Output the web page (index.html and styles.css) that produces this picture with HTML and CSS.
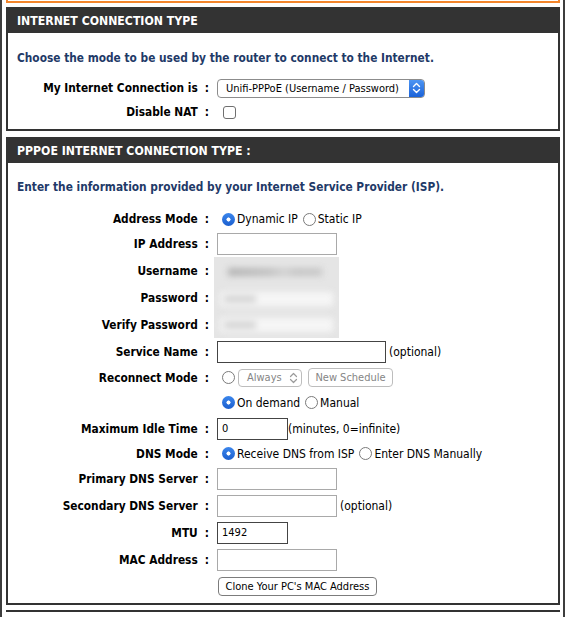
FILE: index.html
```html
<!DOCTYPE html>
<html lang="en">
<head>
<meta charset="utf-8">
<title>WAN Settings</title>
<link rel="stylesheet" href="styles.css">
</head>
<body>
<div class="page">
  <div class="box-tail"></div>

  <section class="box">
    <h2 class="box-head">INTERNET CONNECTION TYPE</h2>
    <p class="box-note note-type">Choose the mode to be used by the router to connect to the Internet.</p>
    <div class="form form-type">
      <div class="lbl">My Internet Connection is<span class="colon">:</span></div>
      <div class="ctl">
        <div class="select select-main">
          <span class="select-text">Unifi-PPPoE (Username / Password)</span>
          <span class="stepper">
            <svg width="9" height="12" viewBox="0 0 9 12"><path d="M1.5 4.5 L4.5 1.5 L7.5 4.5 M1.5 7.5 L4.5 10.5 L7.5 7.5" fill="none" stroke="#fff" stroke-width="1.4" stroke-linecap="round" stroke-linejoin="round"/></svg>
          </span>
        </div>
      </div>
      <div class="lbl">Disable NAT<span class="colon">:</span></div>
      <div class="ctl"><span class="checkbox"></span></div>
    </div>
  </section>

  <section class="box">
    <h2 class="box-head">PPPOE INTERNET CONNECTION TYPE :</h2>
    <p class="box-note note-pppoe">Enter the information provided by your Internet Service Provider (ISP).</p>
    <div class="form form-pppoe">
      <div class="lbl">Address Mode<span class="colon">:</span></div>
      <div class="ctl">
        <span class="radio on"></span><span class="opt">Dynamic IP</span>
        <span class="radio"></span><span class="opt">Static IP</span>
      </div>

      <div class="lbl">IP Address<span class="colon">:</span></div>
      <div class="ctl"><span class="field w-mid"></span></div>

      <div class="lbl">Username<span class="colon">:</span></div>
      <div class="ctl ctl-hidden">
        <div class="masked">
          <span class="masked-user"></span>
          <span class="masked-pass pass-1"><span class="dots"></span></span>
          <span class="masked-pass pass-2"><span class="dots"></span></span>
        </div>
      </div>
      <div class="lbl">Password<span class="colon">:</span></div>
      <div class="lbl">Verify Password<span class="colon">:</span></div>

      <div class="lbl">Service Name<span class="colon">:</span></div>
      <div class="ctl"><span class="field w-wide dark"></span><span class="hint">(optional)</span></div>

      <div class="lbl">Reconnect Mode<span class="colon">:</span></div>
      <div class="ctl">
        <span class="radio"></span>
        <span class="select select-off">
          <span class="select-text">Always</span>
          <svg class="chev" width="9" height="12" viewBox="0 0 9 12"><path d="M1.5 4.5 L4.5 1.5 L7.5 4.5 M1.5 7.5 L4.5 10.5 L7.5 7.5" fill="none" stroke="#9a9a9a" stroke-width="1.2" stroke-linecap="round" stroke-linejoin="round"/></svg>
        </span>
        <span class="btn btn-off">New Schedule</span>
      </div>

      <div class="lbl"></div>
      <div class="ctl">
        <span class="radio on"></span><span class="opt">On demand</span>
        <span class="radio"></span><span class="opt">Manual</span>
      </div>

      <div class="lbl">Maximum Idle Time<span class="colon">:</span></div>
      <div class="ctl"><span class="field w-short dark">0</span><span class="hint hint-tight">(minutes, 0=infinite)</span></div>

      <div class="lbl">DNS Mode<span class="colon">:</span></div>
      <div class="ctl">
        <span class="radio on"></span><span class="opt">Receive DNS from ISP</span>
        <span class="radio"></span><span class="opt">Enter DNS Manually</span>
      </div>

      <div class="lbl">Primary DNS Server<span class="colon">:</span></div>
      <div class="ctl"><span class="field w-mid"></span></div>

      <div class="lbl">Secondary DNS Server<span class="colon">:</span></div>
      <div class="ctl"><span class="field w-mid"></span><span class="hint">(optional)</span></div>

      <div class="lbl">MTU<span class="colon">:</span></div>
      <div class="ctl"><span class="field w-short dark">1492</span></div>

      <div class="lbl">MAC Address<span class="colon">:</span></div>
      <div class="ctl"><span class="field w-mid"></span></div>

      <div class="lbl"></div>
      <div class="ctl"><span class="btn btn-clone">Clone Your PC's MAC Address</span></div>
    </div>
  </section>

  <div class="box-next"></div>
</div>
</body>
</html>
```

FILE: styles.css
```css
html, body {
  margin: 0;
  padding: 0;
  background: #fff;
}

body {
  font-family: "DejaVu Sans Condensed", "DejaVu Sans", sans-serif;
  font-size: 12px;
  color: #000;
}

.page {
  width: 565px;
  min-height: 617px;
  box-sizing: border-box;
  border-left: 2px solid #3d3d3d;
  border-right: 2px solid #3d3d3d;
  padding: 0 3px 0 4px;
}

/* bottom edge of the panel above */
.box-tail {
  height: 1px;
  border: 2px solid #f4862c;
  border-top: 0;
}

.box {
  border: 2px solid #333;
  margin-top: 4px;
}

.box + .box {
  margin-top: 6px;
}

.box-head {
  margin: 0;
  height: 24px;
  line-height: 24px;
  padding-left: 9px;
  background: #333;
  color: #fff;
  font-size: 12.2px;
  font-weight: bold;
}

.box-note {
  margin: 0;
  padding-left: 9px;
  line-height: 14px;
  font-size: 11.8px;
  font-weight: bold;
  color: #1f3a68;
}

.note-type {
  margin-top: 18px;
  margin-bottom: 11px;
}

.note-pppoe {
  margin-top: 17px;
  margin-bottom: 14px;
}

.form {
  display: grid;
  grid-template-columns: 201px 1fr;
  column-gap: 8px;
}

.form-type {
  grid-template-rows: 24px 24px;
  padding-bottom: 5px;
}

.form-pppoe {
  grid-template-rows: 22px 27px 27px 27px 27px 27px 25px 25px 27px 23px 27px 27px 27px 27px 27px;
  padding-bottom: 3px;
}

.lbl {
  display: flex;
  align-items: center;
  justify-content: flex-end;
  font-size: 11.8px;
  font-weight: bold;
  white-space: nowrap;
}

.colon {
  margin-left: 7px;
}

.ctl {
  display: flex;
  align-items: center;
  white-space: nowrap;
}

/* username / password cells, kept out of sight */
.ctl-hidden {
  grid-row: span 3;
  align-items: stretch;
}

.masked {
  position: relative;
  margin-left: -3px;
  width: 125px;
  background: #e5e5e5;
  overflow: hidden;
}

.masked-user,
.masked-pass {
  position: absolute;
  filter: blur(3px);
}

.masked-user {
  left: 14px;
  top: 11px;
  width: 94px;
  height: 8px;
  background: linear-gradient(90deg, #b4b4b4 0, #c2c2c2 45%, #d2d2d2 60%, #c6c6c6 72%, #c8c8c8 100%);
}

.masked-pass {
  left: 6px;
  width: 113px;
  height: 14px;
  background: #f6f6f6;
}

.pass-1 { top: 35px; }
.pass-2 { top: 61px; }

.dots {
  position: absolute;
  left: 4px;
  top: 4px;
  width: 32px;
  height: 6px;
  background: #cfcfcf;
}

.select {
  display: flex;
  align-items: center;
  box-sizing: border-box;
  background: #fff;
  border-radius: 4px;
}

.select-main {
  width: 208px;
  height: 19px;
  border: 1px solid #8c8c8c;
  overflow: hidden;
}

.select-main .select-text {
  flex: 1;
  padding-left: 8px;
  font-size: 11px;
}

.stepper {
  width: 15px;
  height: 100%;
  display: flex;
  align-items: center;
  justify-content: center;
  background: linear-gradient(#4d95f3, #1b62d8);
}

.select-off {
  width: 64px;
  height: 18px;
  margin-left: 3px;
  border: 1px solid #bdbdbd;
  color: #858585;
  font-size: 11px;
}

.select-off .select-text {
  flex: 1;
  padding-left: 8px;
}

.chev {
  margin-right: 3px;
}

.btn {
  display: inline-flex;
  align-items: center;
  justify-content: center;
  box-sizing: border-box;
  background: #fff;
  border-radius: 4px;
  font-size: 11px;
}

.btn-off {
  width: 85px;
  height: 19px;
  margin-left: 6px;
  border: 1px solid #bdbdbd;
  color: #858585;
}

.btn-clone {
  width: 159px;
  height: 19px;
  margin-left: 1px;
  border: 1px solid #7c7c7c;
  color: #000;
}

.checkbox {
  width: 11px;
  height: 11px;
  margin-left: 6px;
  border: 1px solid #6f6f6f;
  border-radius: 3px;
  background: #fff;
}

.radio {
  flex: none;
  width: 11px;
  height: 11px;
  margin-left: 5px;
  border: 1px solid #7a7a7a;
  border-radius: 50%;
  background: #fff;
}

.radio.on {
  width: 13px;
  height: 13px;
  border: 0;
  background: radial-gradient(circle, #fff 0 1.8px, transparent 2.3px), linear-gradient(#3b86ec, #1c5fcf);
}

.opt {
  margin-left: 2px;
}

.opt + .radio {
  margin-left: 5px;
}

.field {
  display: flex;
  align-items: center;
  box-sizing: border-box;
  height: 22px;
  padding-left: 4px;
  border: 1px solid #a9a9a9;
  background: #fff;
  font-size: 11px;
}

.field.dark {
  border-color: #444;
}

.w-mid { width: 120px; }
.w-wide { width: 169px; }
.w-short { width: 71px; }

.hint {
  margin-left: 3px;
}

.hint-tight {
  margin-left: 0;
}

/* top edge of the next panel */
.box-next {
  margin-top: 5px;
  height: 2px;
  background: #333;
}
```
